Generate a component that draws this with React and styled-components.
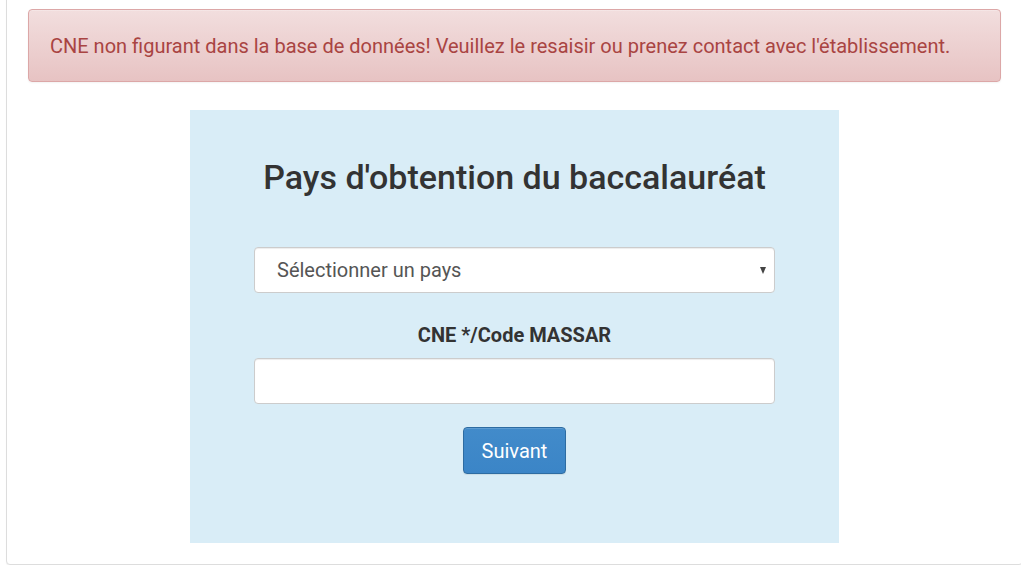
import React from 'react'
import styled, { createGlobalStyle } from 'styled-components'

const GlobalStyle = createGlobalStyle`
  html, body {
    margin: 0;
    padding: 0;
    background: #fff;
    overflow: hidden;
  }
  body {
    font-family: Roboto, "Liberation Sans", sans-serif;
    color: #333;
  }
`

const Panel = styled.div`
  margin: -20px 0 0 6px;
  width: 1017px;
  box-sizing: border-box;
  padding: 28px 21px 21px 21px;
  border: 1px solid #ddd;
  border-radius: 4px;
  box-shadow: 0 1px 1px rgba(0, 0, 0, 0.05);
  background: #fff;
`

const Alert = styled.div`
  box-sizing: border-box;
  height: 73px;
  display: flex;
  align-items: center;
  padding: 0 21px;
  color: #a94442;
  font-size: 20px;
  background-image: linear-gradient(to bottom, #f2dede 0, #e7c3c3 100%);
  border: 1px solid #dca7a7;
  border-radius: 4px;
  box-shadow: inset 0 1px 0 rgba(255, 255, 255, 0.25), 0 1px 2px rgba(0, 0, 0, 0.05);
`

const FormBox = styled.div`
  width: 649px;
  margin: 28px auto 0;
  box-sizing: border-box;
  background: #d9edf7;
  padding: 49px 63px 69px;
  display: flex;
  flex-direction: column;
  align-items: center;
`

const Title = styled.h2`
  margin: 0 0 51px;
  height: 37px;
  font-size: 34px;
  font-weight: 500;
  line-height: 37px;
  color: #333;
`

const Field = styled.div`
  position: relative;
  width: 521px;
  height: 46px;
  box-sizing: border-box;
  background: #fff;
  border: 1px solid #ccc;
  border-radius: 4px;
  box-shadow: inset 0 1px 1px rgba(0, 0, 0, 0.075);
  display: flex;
  align-items: center;
  padding: 0 22px;
  font-size: 20px;
  color: #555;
`

const Caret = styled.span`
  position: absolute;
  right: 8px;
  top: 19px;
  width: 0;
  height: 0;
  border-left: 3.5px solid transparent;
  border-right: 3.5px solid transparent;
  border-top: 7px solid #444;
`

const Label = styled.label`
  margin: 31px 0 11px;
  height: 23px;
  line-height: 23px;
  font-size: 20px;
  font-weight: 700;
  color: #333;
`

const Button = styled.button`
  margin-top: 23px;
  width: 103px;
  height: 47px;
  border: 1px solid #2d6ca2;
  border-radius: 4px;
  background-image: linear-gradient(to bottom, #428bca 0, #3b85c7 100%);
  color: #fff;
  font-family: Roboto, "Liberation Sans", sans-serif;
  font-size: 20px;
  box-shadow: inset 0 1px 0 rgba(255, 255, 255, 0.15), 0 1px 1px rgba(0, 0, 0, 0.075);
`

const App = () => {
  return (
    <>
      <GlobalStyle />
      <Panel>
        <Alert>
          CNE non figurant dans la base de données! Veuillez le resaisir ou prenez contact avec l'établissement.
        </Alert>
        <FormBox>
          <Title>Pays d'obtention du baccalauréat</Title>
          <Field>
            Sélectionner un pays
            <Caret />
          </Field>
          <Label>CNE */Code MASSAR</Label>
          <Field />
          <Button>Suivant</Button>
        </FormBox>
      </Panel>
    </>
  )
}

export default App
